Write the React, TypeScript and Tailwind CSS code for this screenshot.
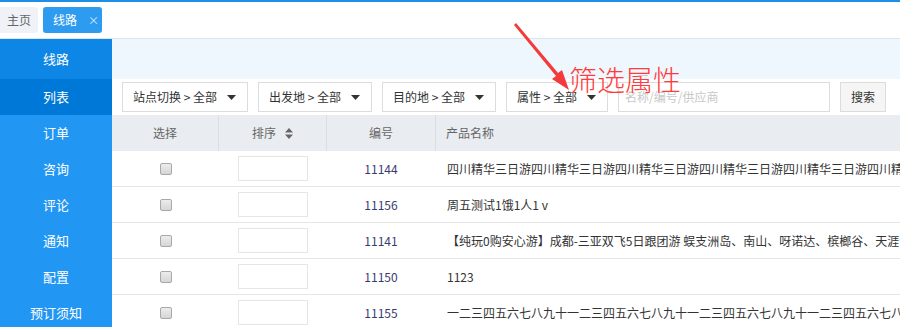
import React from "react";

const rows = [
  { id: "11144", name: "四川精华三日游".repeat(8) },
  { id: "11156", name: "周五测试1饿1人1 v" },
  { id: "11141", name: "【纯玩0购安心游】成都-三亚双飞5日跟团游 蜈支洲岛、南山、呀诺达、槟榔谷、天涯海角、亚龙湾" },
  { id: "11150", name: "1123" },
  { id: "11155", name: "一二三四五六七八九十".repeat(5) },
];

const side = ["订单", "咨询", "评论", "通知", "配置", "预订须知"];

function Caret() {
  return (
    <svg width="9" height="5" viewBox="0 0 9 5" className="shrink-0">
      <path d="M0 0 L9 0 L4.5 5 Z" fill="#333" />
    </svg>
  );
}

function Select({ label, w }: { label: string; w: string }) {
  return (
    <div className={`${w} h-[30px] border border-[#dcdcdc] bg-white flex items-center justify-between pl-[10px] pr-[11px] text-[12px] text-[#333] shrink-0`}>
      <span className="whitespace-nowrap">{label}</span>
      <Caret />
    </div>
  );
}

export default function App() {
  return (
    <div
      className="w-[900px] h-[327px] overflow-hidden relative bg-white"
      style={{ fontFamily: '"Noto Sans CJK SC", "Noto Sans", sans-serif' }}
    >
      <div className="h-[2px] bg-[#1e8fe9]" />
      <div className="h-[37px] border-b border-[#dde5ee] flex items-center gap-[5px]">
        <div className="w-[38px] h-[26px] bg-[#eff2f7] rounded-r-[3px] flex items-center justify-center text-[12px] text-[#666]">
          主页
        </div>
        <div className="w-[59px] h-[26px] bg-[#2d9bef] rounded-[3px] flex items-center pl-[10px] text-[12px] text-white">
          <span>线路</span>
          <span className="ml-[11px] text-[11px] text-[#d8ecfc]">×</span>
        </div>
      </div>
      <div className="flex">
        <aside className="w-[112px] shrink-0 bg-[#2196f3] text-white text-[13px]">
          <div className="h-[40px] bg-[#0e86e6] flex items-center justify-center">线路</div>
          <div className="h-[36px] bg-[#0078d8] flex items-center justify-center">列表</div>
          {side.map((s) => (
            <div key={s} className="h-[36px] flex items-center justify-center">
              {s}
            </div>
          ))}
        </aside>
        <main className="flex-1 min-w-0 overflow-hidden">
          <div className="h-[40px] bg-[#eef6fe]" />
          <div className="h-[36px] flex items-center gap-[10px] pl-[10px]">
            <Select label="站点切换 > 全部" w="w-[126px]" />
            <Select label="出发地 > 全部" w="w-[114px]" />
            <Select label="目的地 > 全部" w="w-[114px]" />
            <Select label="属性 > 全部" w="w-[102px]" />
            <div className="w-[212px] h-[30px] border border-[#dcdcdc] flex items-center px-[6px] text-[12px] text-[#c8c8c8] shrink-0">
              名称/编号/供应商
            </div>
            <div className="w-[46px] h-[30px] border border-[#dcdcdc] bg-[#f5f5f5] flex items-center justify-center text-[12px] text-[#333] shrink-0">
              搜索
            </div>
          </div>
          <div className="h-[36px] bg-[#e9ecf0] flex text-[12px] text-[#666]">
            <div className="w-[107px] border-r border-[#dadde2] flex items-center justify-center">选择</div>
            <div className="w-[108px] border-r border-[#dadde2] flex items-center justify-center gap-[9px]">
              <span>排序</span>
              <svg width="8" height="11" viewBox="0 0 8 11">
                <path d="M0 4.5 L4 0 L8 4.5 Z M0 6.5 L8 6.5 L4 11 Z" fill="#666" />
              </svg>
            </div>
            <div className="w-[109px] border-r border-[#dadde2] flex items-center justify-center">编号</div>
            <div className="flex-1 flex items-center pl-[10px]">产品名称</div>
          </div>
          {rows.map((r) => (
            <div key={r.id} className="h-[36px] border-b border-[#e6e6e6] flex text-[12px] text-[#333]">
              <div className="w-[107px] shrink-0 flex items-center justify-center">
                <div className="w-[12px] h-[12px] rounded-[2px] border border-[#a8a8a8] bg-gradient-to-b from-[#ececec] to-[#d6d6d6]" />
              </div>
              <div className="w-[108px] shrink-0 flex items-center justify-center pr-[1px]">
                <div className="w-[70px] h-[25px] border border-[#e6e6e6] bg-white" />
              </div>
              <div className="w-[109px] shrink-0 flex items-center justify-center text-[#3a3a70] pr-[1px]">{r.id}</div>
              <div className="flex-1 flex items-center pl-[11px] whitespace-nowrap overflow-hidden">{r.name}</div>
            </div>
          ))}
        </main>
      </div>
      <svg className="absolute left-0 top-0 pointer-events-none" width="900" height="327">
        <path d="M516 23 L558 73 L562 70 L569 90 L552 79 L556 76 L514 25 Z" fill="#f43a3a" />
      </svg>
      <div
        className="absolute left-[569px] top-[60px] text-[28px] leading-[38px] text-[#ff3c3c] font-light whitespace-nowrap"
      >
        筛选属性
      </div>
    </div>
  );
}
